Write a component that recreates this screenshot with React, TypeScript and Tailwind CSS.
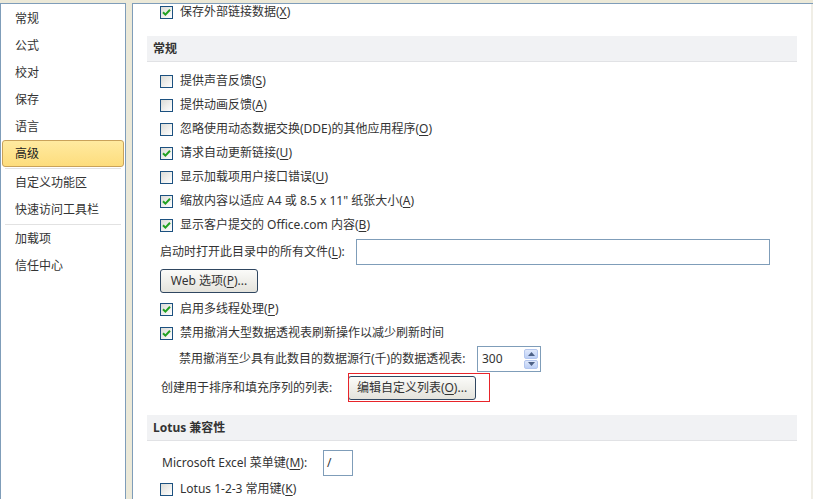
import type { ReactNode } from "react";

const FONT = { fontFamily: '"Noto Sans", "Noto Sans CJK SC", sans-serif' };

const NAV = [
  ["常规", "公式", "校对", "保存", "语言", "高级"],
  ["自定义功能区", "快速访问工具栏"],
  ["加载项", "信任中心"],
];

function Check({ checked }: { checked?: boolean }) {
  return (
    <span className="w-[13px] h-[13px] shrink-0 border border-[#1c5180] bg-linear-to-br from-[#dcdcd7] to-white flex items-center justify-center">
      {checked && (
        <svg width="9" height="9" viewBox="0 0 9 9">
          <path d="M1 4.2 L3.4 6.6 L8 1.8" fill="none" stroke="#21a121" strokeWidth="2" />
        </svg>
      )}
    </span>
  );
}

function Row({ checked, children }: { checked?: boolean; children: ReactNode }) {
  return (
    <div className="h-[24px] shrink-0 flex items-center gap-[7px] pl-[27px]">
      <Check checked={checked} />
      <span>{children}</span>
    </div>
  );
}

function Header({ children }: { children: ReactNode }) {
  return (
    <div className="h-[26px] shrink-0 mx-[14px] bg-[#f1f2f4] border-b border-[#e1e2e5] flex items-center pl-[6px] font-bold text-[#333]">
      {children}
    </div>
  );
}

function Button({ w, children }: { w: string; children: ReactNode }) {
  return (
    <span
      className={`${w} h-[24px] shrink-0 rounded-[3px] border border-[#2f4660] bg-linear-to-b from-[#fbfbf9] to-[#e4e3dc] flex items-center justify-center`}
    >
      {children}
    </span>
  );
}

export default function App() {
  return (
    <div
      className="w-[813px] h-[499px] bg-[#ece9d8] pt-[3px] flex overflow-hidden text-[12px] text-[#333]"
      style={FONT}
    >
      <aside className="w-[126px] shrink-0 h-[510px] bg-white border border-[#7f9db9] pt-px flex flex-col">
        {NAV.map((group, gi) => (
          <div key={gi} className="flex flex-col">
            {gi > 0 && (
              <div className="h-[2px] flex items-center px-[4px]">
                <div className="h-px w-full bg-[#e2e2e2]" />
              </div>
            )}
            {group.map((item) =>
              item === "高级" ? (
                <div key={item} className="h-[27px] px-px">
                  <div className="h-[27px] rounded-[3px] border border-[#c9a25a] bg-linear-to-b from-[#ffeaa0] to-[#fddd7c] flex items-center pl-[12px] text-[#222]">
                    {item}
                  </div>
                </div>
              ) : (
                <div key={item} className="h-[27px] flex items-center pl-[14px]">
                  {item}
                </div>
              )
            )}
          </div>
        ))}
      </aside>

      <main className="ml-[6px] flex-1 h-[510px] bg-white border-l border-t border-[#7f9db9] flex flex-col">
        <div className="h-[16px] shrink-0 flex items-center gap-[7px] pl-[27px]">
          <Check checked />
          <span>
            保存外部链接数据(<u className="underline-offset-2">X</u>)
          </span>
        </div>

        <div className="mt-[16px]" />
        <Header>常规</Header>

        <div className="mt-[7px]" />
        <Row>提供声音反馈(<u className="underline-offset-2">S</u>)</Row>
        <Row>提供动画反馈(<u className="underline-offset-2">A</u>)</Row>
        <Row>忽略使用动态数据交换(DDE)的其他应用程序(<u className="underline-offset-2">O</u>)</Row>
        <Row checked>请求自动更新链接(<u className="underline-offset-2">U</u>)</Row>
        <Row>显示加载项用户接口错误(<u className="underline-offset-2">U</u>)</Row>
        <Row checked>
          缩放内容以适应 A4 或 8.5 x 11" 纸张大小(<u className="underline-offset-2">A</u>)
        </Row>
        <Row checked>
          显示客户提交的 Office.com 内容(<u className="underline-offset-2">B</u>)
        </Row>

        <div className="mt-[2px] h-[26px] shrink-0 flex items-center pl-[27px]">
          <span className="w-[196px] shrink-0">
            启动时打开此目录中的所有文件(<u className="underline-offset-2">L</u>):
          </span>
          <span className="w-[414px] h-[26px] border border-[#7f9db9] bg-white" />
        </div>

        <div className="mt-[4px] flex pl-[27px]">
          <Button w="w-[98px]">
            Web 选项(<u className="underline-offset-2">P</u>)...
          </Button>
        </div>

        <div className="mt-[4px]" />
        <Row checked>启用多线程处理(<u className="underline-offset-2">P</u>)</Row>
        <Row checked>禁用撤消大型数据透视表刷新操作以减少刷新时间</Row>

        <div className="mt-px h-[26px] shrink-0 flex items-center pl-[46px]">
          <span className="w-[298px] shrink-0">禁用撤消至少具有此数目的数据源行(千)的数据透视表:</span>
          <span className="w-[64px] h-[26px] border border-[#7f9db9] bg-white flex items-center justify-between pl-[4px] pr-[2px]">
            <span>300</span>
            <span className="w-[14px] h-[20px] flex flex-col gap-px">
              <span className="flex-1 rounded-[2px] bg-linear-to-b from-[#dfe8fb] to-[#bccff5] border border-[#b3c6ee] flex items-center justify-center">
                <svg width="7" height="4" viewBox="0 0 7 4">
                  <path d="M0 4 L3.5 0 L7 4 Z" fill="#4d6185" />
                </svg>
              </span>
              <span className="flex-1 rounded-[2px] bg-linear-to-b from-[#dfe8fb] to-[#bccff5] border border-[#b3c6ee] flex items-center justify-center">
                <svg width="7" height="4" viewBox="0 0 7 4">
                  <path d="M0 0 L3.5 4 L7 0 Z" fill="#4d6185" />
                </svg>
              </span>
            </span>
          </span>
        </div>

        <div className="mt-[4px] h-[24px] shrink-0 flex items-center pl-[28px]">
          <span className="w-[187px] shrink-0">创建用于排序和填充序列的列表:</span>
          <span className="relative flex">
            <Button w="w-[128px]">
              编辑自定义列表(<u className="underline-offset-2">O</u>)...
            </Button>
            <span className="absolute left-0 top-[-3px] w-[142px] h-[29px] border border-[#e8242a] pointer-events-none" />
          </span>
        </div>

        <div className="mt-[15px]" />
        <Header>Lotus 兼容性</Header>

        <div className="mt-[9px] h-[26px] shrink-0 flex items-center pl-[29px]">
          <span className="w-[161px] shrink-0">
            Microsoft Excel 菜单键(<u className="underline-offset-2">M</u>):
          </span>
          <span className="w-[30px] h-[26px] border border-[#7f9db9] bg-white flex items-center pl-[3px]">/</span>
        </div>

        <div className="mt-px" />
        <Row>
          Lotus 1-2-3 常用键(<u className="underline-offset-2">K</u>)
        </Row>
      </main>

      <div className="w-[2px] shrink-0 h-[510px] bg-[#f0eee6] border-t border-[#7f9db9]" />
    </div>
  );
}
